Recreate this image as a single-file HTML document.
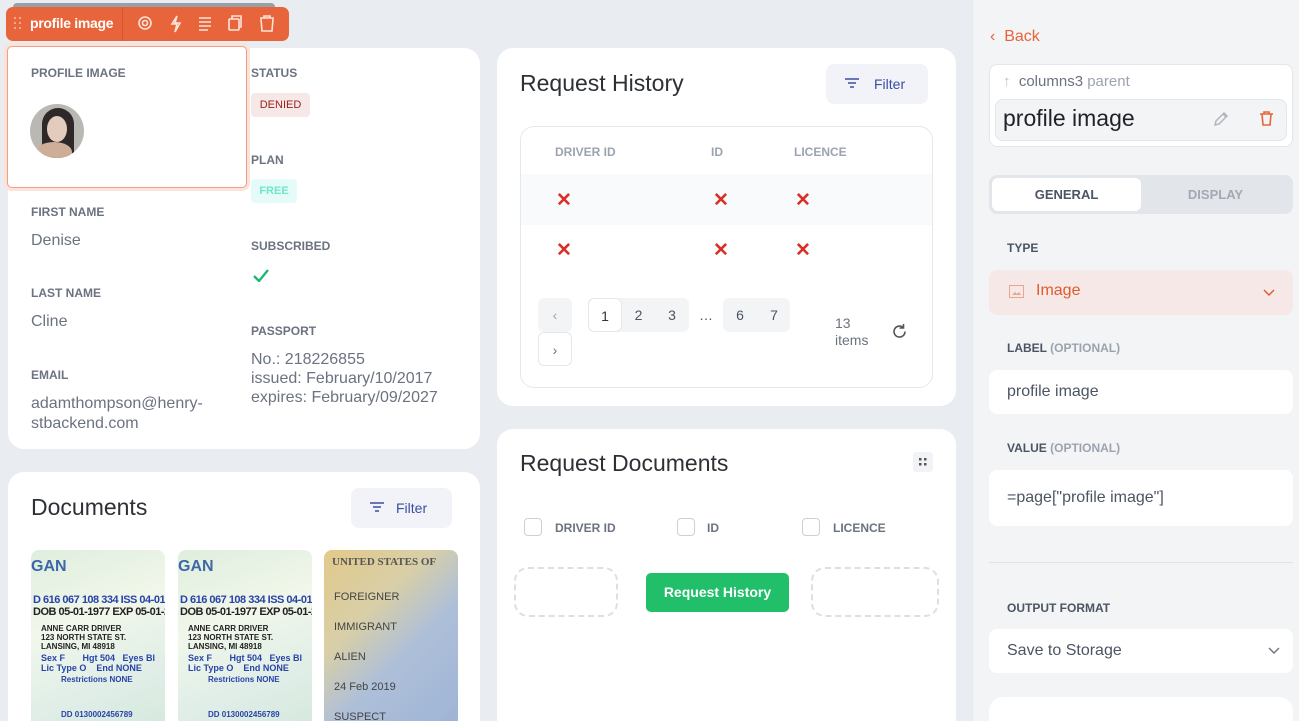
<!DOCTYPE html>
<html><head><meta charset="utf-8"><style>
*{box-sizing:border-box;margin:0;padding:0}
html,body{width:1299px;height:721px;overflow:hidden}
body{background:#e9ecf1;font-family:"Liberation Sans",sans-serif;position:relative;color:#374151}
.a{position:absolute}
.card{position:absolute;background:#fff;border-radius:16px}
.lbl{position:absolute;font-size:12px;font-weight:bold;color:#6b7280}
.val{position:absolute;font-size:16px;color:#6b7280}
.h{position:absolute;font-size:23px;color:#2d3035}
.btn{position:absolute;background:#f1f3f8;border-radius:8px;color:#3b4fa0;font-size:14px}
.x{position:absolute;color:#d93025;font-size:19px;font-weight:bold;line-height:1}
.pg{position:absolute;top:298px;height:34px;background:#f3f4f6;font-size:14px;color:#4b5563;text-align:center;line-height:34px}
.cb{position:absolute;width:18px;height:18px;border:1px solid #cbd0d8;border-radius:4px}
.dash{position:absolute;border:2px dashed #dcdfe4;border-radius:14px}
.inp{position:absolute;left:989px;width:304px;background:#fff;border-radius:8px;font-size:16px;color:#4b5563;padding-left:18px}
.rl{position:absolute;left:1007px;font-size:12px;font-weight:bold;color:#4b5563}
.rl span{color:#9ca3af}
.doc{position:absolute;top:550px;width:134px;height:171px;border-radius:8px 8px 0 0;overflow:hidden;background:linear-gradient(160deg,#dfeede,#f1f7ea 40%,#e2efe8 70%,#d6e9df)}
.doc .t{position:absolute;font-size:10px;font-weight:bold;color:#2843a8;white-space:nowrap}
</style></head><body>

<!-- right panel -->
<div class="a" style="left:972px;top:0;width:327px;height:721px;background:#f3f4f6;border-left:1px solid #e5e7eb"></div>
<div class="a" style="left:990px;top:28px;font-size:16px;color:#e8643a">‹&nbsp; Back</div>
<div class="a" style="left:989px;top:64px;width:304px;height:83px;background:#fff;border:1px solid #e3e6ea;border-radius:8px"></div>
<div class="a" style="left:1003px;top:73px;font-size:15px;color:#9ca3af"><span style="color:#b8bec7">↑</span>&nbsp; <span style="color:#6b7280">columns3</span> parent</div>
<div class="a" style="left:995px;top:99px;width:292px;height:42px;background:#f3f4f6;border:1px solid #e3e6ea;border-radius:8px"></div>
<div class="a" style="left:1003px;top:105px;font-size:23px;color:#1f2329">profile image</div>
<svg class="a" style="left:1212px;top:110px" width="18" height="18" viewBox="0 0 18 18"><path d="M3 15l1-4 8-8 3 3-8 8z M11 4l3 3" fill="none" stroke="#b0b6bf" stroke-width="1.5"/></svg>
<svg class="a" style="left:1258px;top:110px" width="17" height="17" viewBox="0 0 17 17"><path d="M2 4h13M6 4V2h5v2M4 4l1 11h7l1-11" fill="none" stroke="#e8643a" stroke-width="1.6"/></svg>

<div class="a" style="left:989px;top:175px;width:304px;height:39px;background:#e2e5ea;border-radius:8px"></div>
<div class="a" style="left:992px;top:178px;width:149px;height:33px;background:#fff;border-radius:6px;font-size:13px;font-weight:bold;color:#4b5563;text-align:center;line-height:33px">GENERAL</div>
<div class="a" style="left:1141px;top:178px;width:149px;height:33px;font-size:13px;font-weight:bold;color:#a3a9b3;text-align:center;line-height:33px">DISPLAY</div>
<div class="rl" style="top:241px">TYPE</div>
<div class="a" style="left:989px;top:270px;width:304px;height:45px;background:#f5e8e6;border-radius:8px"></div>
<svg class="a" style="left:1009px;top:285px" width="15" height="13" viewBox="0 0 15 13"><rect x="0.5" y="0.5" width="14" height="12" fill="none" stroke="#e9a58f"/><path d="M3 10l3-3 2 2 2-2 2 3z" fill="#e9a58f"/></svg>
<div class="a" style="left:1036px;top:282px;font-size:16px;color:#e05a2f">Image</div>
<svg class="a" style="left:1263px;top:289px" width="12" height="8" viewBox="0 0 12 8"><path d="M1 1l5 5 5-5" fill="none" stroke="#e05a2f" stroke-width="1.4"/></svg>
<div class="rl" style="top:341px">LABEL <span>(OPTIONAL)</span></div>
<div class="inp" style="top:370px;height:44px;line-height:44px">profile image</div>
<div class="rl" style="top:441px">VALUE <span>(OPTIONAL)</span></div>
<div class="inp" style="top:470px;height:56px;line-height:56px">=page["profile image"]</div>
<div class="a" style="left:989px;top:562px;width:304px;height:1px;background:#dfe2e8"></div>
<div class="rl" style="top:601px">OUTPUT FORMAT</div>
<div class="inp" style="top:629px;height:44px;line-height:44px">Save to Storage</div>
<svg class="a" style="left:1268px;top:647px" width="12" height="8" viewBox="0 0 12 8"><path d="M1 1l5 5 5-5" fill="none" stroke="#6b7280" stroke-width="1.4"/></svg>
<div class="a" style="left:989px;top:697px;width:304px;height:24px;background:#fff;border-radius:14px 14px 0 0"></div>

<!-- card 1 -->
<div class="card" style="left:8px;top:48px;width:472px;height:401px"></div>
<div class="a" style="left:13px;top:3px;width:262px;height:6px;background:#9aa0a8;border-radius:4px 4px 0 0"></div>
<div class="a" style="left:6px;top:7px;width:283px;height:34px;background:#e8643a;border-radius:7px"></div>
<div class="a" style="left:122px;top:7px;width:1px;height:34px;background:#d4552e"></div>
<svg class="a" style="left:14px;top:17px" width="8" height="13" viewBox="0 0 8 13" fill="#f4a88e"><rect x="0" y="0" width="2" height="2"/><rect x="5" y="0" width="2" height="2"/><rect x="0" y="5" width="2" height="2"/><rect x="5" y="5" width="2" height="2"/><rect x="0" y="10" width="2" height="2"/><rect x="5" y="10" width="2" height="2"/></svg>
<div class="a" style="left:30px;top:15px;font-size:14px;font-weight:bold;color:#fff;letter-spacing:-0.3px">profile image</div>
<svg class="a" style="left:136px;top:14px" width="140" height="20" viewBox="0 0 140 20" fill="none" stroke="#fbe3da" stroke-width="1.6">
<circle cx="9" cy="9" r="6"/><circle cx="9" cy="9" r="2.5"/>
<path d="M41 2l-5 8h5l-2 8 5-9h-5z"/>
<path d="M63 4h12M63 8h12M63 12h12M63 16h9"/>
<rect x="93" y="5" width="10" height="11" rx="1"/><path d="M96 5V2h9v11h-2"/>
<path d="M124 4h14M128 4V2h6v2M125 5l1 12h10l1-12"/>
</svg>
<div class="a" style="left:7px;top:46px;width:240px;height:142px;border:1px solid #ef9f85;border-radius:5px;box-shadow:0 0 0 3px #fbe3da;background:#fff"></div>
<div class="lbl" style="left:31px;top:66px">PROFILE IMAGE</div>
<div class="a" style="left:30px;top:104px;width:54px;height:54px;border-radius:50%;overflow:hidden;background:#b9b8b2">
 <div class="a" style="left:12px;top:4px;width:32px;height:52px;border-radius:16px 16px 4px 4px;background:#2e2828"></div>
 <div class="a" style="left:17px;top:12px;width:20px;height:26px;border-radius:50%;background:#e3cbbd"></div>
 <div class="a" style="left:6px;top:38px;width:36px;height:20px;border-radius:50% 50% 0 0;background:#cfae98"></div>
</div>
<div class="lbl" style="left:251px;top:66px">STATUS</div>
<div class="a" style="left:251px;top:93px;width:59px;height:24px;background:#f5e8e6;border-radius:4px;font-size:11px;color:#9b1c1c;text-align:center;line-height:24px">DENIED</div>
<div class="lbl" style="left:251px;top:153px">PLAN</div>
<div class="a" style="left:251px;top:179px;width:46px;height:24px;background:#e4fbfa;border-radius:4px;font-size:11px;font-weight:bold;color:#6ee7c9;text-align:center;line-height:24px">FREE</div>
<div class="lbl" style="left:251px;top:239px">SUBSCRIBED</div>
<svg class="a" style="left:253px;top:269px" width="16" height="13" viewBox="0 0 16 13"><path d="M1 7l5 5L15 1" fill="none" stroke="#22b573" stroke-width="2.4"/></svg>
<div class="lbl" style="left:251px;top:324px">PASSPORT</div>
<div class="val" style="left:251px;top:350px;line-height:19px">No.: 218226855<br>issued: February/10/2017<br>expires: February/09/2027</div>
<div class="lbl" style="left:31px;top:205px">FIRST NAME</div>
<div class="val" style="left:31px;top:232px">Denise</div>
<div class="lbl" style="left:31px;top:286px">LAST NAME</div>
<div class="val" style="left:31px;top:313px">Cline</div>
<div class="lbl" style="left:31px;top:368px">EMAIL</div>
<div class="val" style="left:31px;top:394px;line-height:20px">adamthompson@henry-<br>stbackend.com</div>

<!-- documents -->
<div class="card" style="left:8px;top:472px;width:472px;height:249px;border-radius:16px 16px 0 0"></div>
<div class="h" style="left:31px;top:494px">Documents</div>
<div class="btn" style="left:351px;top:488px;width:101px;height:40px;line-height:40px;padding-left:45px">Filter</div>
<svg class="a" style="left:370px;top:501px" width="14" height="12" viewBox="0 0 14 12" stroke="#3b4fa0" stroke-width="1.5"><path d="M0 2h14M3 6h8M5 10h4"/></svg>
<div class="doc" style="left:31px"><div class="t" style="left:0;top:8px;font-size:16px;color:#3e67a8">GAN</div><div class="t" style="left:2px;top:44px;font-size:11px;letter-spacing:-0.5px">D 616 067 108 334 ISS 04-01-2</div><div class="t" style="left:2px;top:56px;font-size:11px;color:#222;letter-spacing:-0.5px">DOB 05-01-1977 EXP 05-01-2</div><div class="t" style="left:10px;top:74px;font-size:8px;color:#222">ANNE CARR DRIVER<br>123 NORTH STATE ST.<br>LANSING, MI 48918</div><div class="t" style="left:10px;top:103px;font-size:9px">Sex F &nbsp;&nbsp;&nbsp;&nbsp;&nbsp; Hgt 504 &nbsp; Eyes Bl<br>Lic Type O &nbsp;&nbsp; End NONE</div><div class="t" style="left:30px;top:125px;font-size:8px">Restrictions NONE</div><div class="t" style="left:30px;top:160px;font-size:8px">DD 0130002456789</div></div>
<div class="doc" style="left:178px"><div class="t" style="left:0;top:8px;font-size:16px;color:#3e67a8">GAN</div><div class="t" style="left:2px;top:44px;font-size:11px;letter-spacing:-0.5px">D 616 067 108 334 ISS 04-01-2</div><div class="t" style="left:2px;top:56px;font-size:11px;color:#222;letter-spacing:-0.5px">DOB 05-01-1977 EXP 05-01-2</div><div class="t" style="left:10px;top:74px;font-size:8px;color:#222">ANNE CARR DRIVER<br>123 NORTH STATE ST.<br>LANSING, MI 48918</div><div class="t" style="left:10px;top:103px;font-size:9px">Sex F &nbsp;&nbsp;&nbsp;&nbsp;&nbsp; Hgt 504 &nbsp; Eyes Bl<br>Lic Type O &nbsp;&nbsp; End NONE</div><div class="t" style="left:30px;top:125px;font-size:8px">Restrictions NONE</div><div class="t" style="left:30px;top:160px;font-size:8px">DD 0130002456789</div></div>
<div class="doc" style="left:324px;background:linear-gradient(135deg,#e3c98a,#d8cfa8 35%,#aebfd8 60%,#9fb4d6)"><div class="t" style="left:8px;top:6px;font-size:11px;color:#555;font-family:'Liberation Serif',serif">UNITED STATES OF</div><div class="t" style="left:10px;top:40px;font-size:11px;color:#444;font-weight:normal;line-height:15px">FOREIGNER<br><br>IMMIGRANT<br><br>ALIEN<br><br>24 Feb 2019<br><br>SUSPECT<br><br>4 JUL 1776<br><br>UNDOCUMENTED<br>SEE PAGE 28</div></div>

<!-- request history -->
<div class="card" style="left:497px;top:48px;width:459px;height:358px"></div>
<div class="h" style="left:520px;top:70px">Request History</div>
<div class="btn" style="left:826px;top:64px;width:102px;height:40px;line-height:40px;padding-left:48px">Filter</div>
<svg class="a" style="left:845px;top:77px" width="14" height="12" viewBox="0 0 14 12" stroke="#3b4fa0" stroke-width="1.5"><path d="M0 2h14M3 6h8M5 10h4"/></svg>
<div class="a" style="left:520px;top:126px;width:413px;height:262px;border:1px solid #e5e7eb;border-radius:14px"></div>
<div class="a" style="left:521px;top:174px;width:411px;height:51px;background:#f9fafb"></div>
<div class="lbl" style="left:555px;top:145px;color:#9ca3af">DRIVER ID</div>
<div class="lbl" style="left:711px;top:145px;color:#9ca3af">ID</div>
<div class="lbl" style="left:794px;top:145px;color:#9ca3af">LICENCE</div>
<div class="x" style="left:556px;top:191px">✕</div><div class="x" style="left:713px;top:191px">✕</div><div class="x" style="left:795px;top:191px">✕</div>
<div class="x" style="left:556px;top:241px">✕</div><div class="x" style="left:713px;top:241px">✕</div><div class="x" style="left:795px;top:241px">✕</div>
<div class="pg" style="left:538px;width:34px;border-radius:6px;color:#9ca3af">‹</div>
<div class="pg" style="left:538px;top:332px;width:34px;background:#fff;border:1px solid #e5e7eb;border-radius:6px;color:#6b7280">›</div>
<div class="pg" style="left:588px;width:101px;border-radius:6px"></div>
<div class="pg" style="left:588px;width:34px;background:#fff;border:1px solid #e5e7eb;border-radius:6px;color:#333">1</div>
<div class="pg" style="left:622px;width:33px;background:none">2</div>
<div class="pg" style="left:655px;width:34px;background:none">3</div>
<div class="pg" style="left:689px;width:34px;background:none">…</div>
<div class="pg" style="left:723px;width:67px;border-radius:6px"></div>
<div class="pg" style="left:723px;width:34px;background:none">6</div>
<div class="pg" style="left:757px;width:34px;background:none">7</div>
<div class="a" style="left:835px;top:315px;font-size:14px;color:#6b7280;line-height:17px">13<br>items</div>
<svg class="a" style="left:891px;top:323px" width="17" height="17" viewBox="0 0 17 17"><path d="M14 8.5A5.5 5.5 0 1 1 12 4.3M12.5 1v4h-4" fill="none" stroke="#555" stroke-width="1.6"/></svg>

<!-- request documents -->
<div class="card" style="left:497px;top:429px;width:459px;height:292px;border-radius:16px 16px 0 0"></div>
<div class="h" style="left:520px;top:450px">Request Documents</div>
<div class="a" style="left:913px;top:452px;width:20px;height:20px;background:#f1f3f6;border-radius:3px"></div>
<svg class="a" style="left:918px;top:457px" width="10" height="10" viewBox="0 0 10 10" fill="#555"><rect x="1" y="1" width="2.5" height="2.5"/><rect x="6" y="1" width="2.5" height="2.5"/><rect x="1" y="6" width="2.5" height="2.5"/><rect x="6" y="6" width="2.5" height="2.5"/></svg>
<div class="cb" style="left:524px;top:518px"></div><div class="lbl" style="left:555px;top:521px">DRIVER ID</div>
<div class="cb" style="left:677px;top:518px"></div><div class="lbl" style="left:707px;top:521px">ID</div>
<div class="cb" style="left:802px;top:518px"></div><div class="lbl" style="left:833px;top:521px">LICENCE</div>
<div class="dash" style="left:514px;top:567px;width:104px;height:50px"></div>
<div class="dash" style="left:811px;top:567px;width:128px;height:50px"></div>
<div class="a" style="left:646px;top:573px;width:143px;height:39px;background:#22bf6a;border-radius:5px;color:#fff;font-size:14px;font-weight:bold;text-align:center;line-height:39px">Request History</div>
</body></html>
